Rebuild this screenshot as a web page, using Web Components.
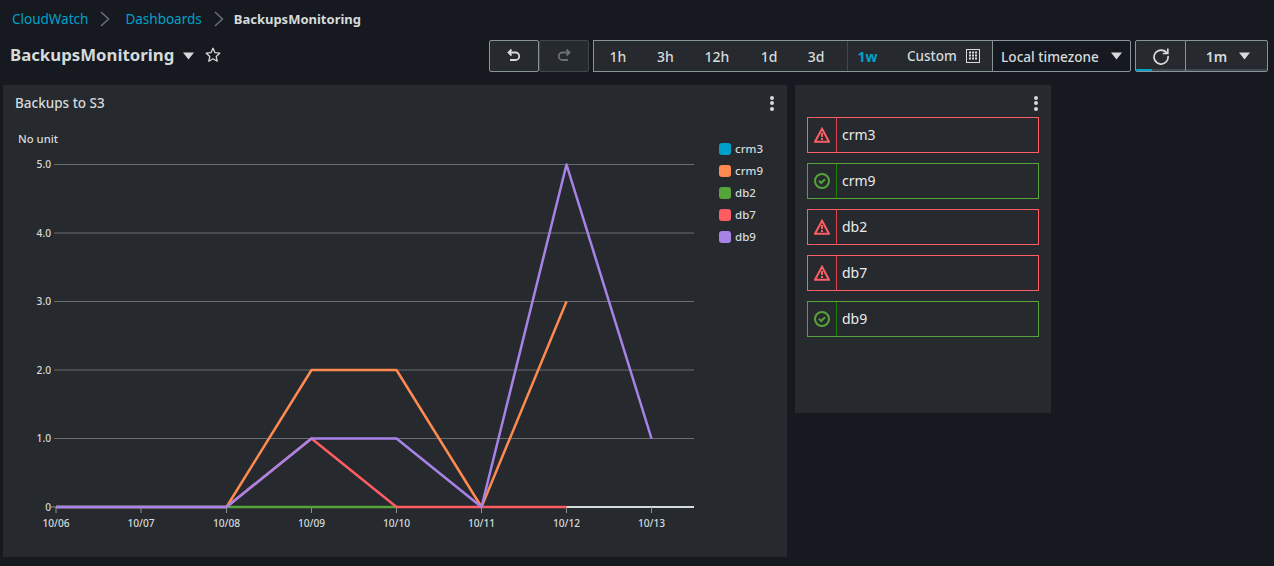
<!doctype html>
<html>
<head>
<meta charset="utf-8">
<title>BackupsMonitoring</title>
<style>
  html, body { margin: 0; height: 566px; overflow: hidden; background: #16191f; }
  body { font-family: "Noto Sans", "Open Sans", sans-serif; color: #d5dbdb; }
</style>
</head>
<body>
<cw-breadcrumbs>
  <a href="#">CloudWatch</a>
  <a href="#">Dashboards</a>
  <span>BackupsMonitoring</span>
</cw-breadcrumbs>
<cw-header name="BackupsMonitoring"></cw-header>
<cw-board>
  <cw-widget heading="Backups to S3" style="--h:472px">
    <cw-chart></cw-chart>
  </cw-widget>
  <cw-widget style="--h:328px">
    <cw-alarm state="alarm">crm3</cw-alarm>
    <cw-alarm state="ok">crm9</cw-alarm>
    <cw-alarm state="alarm">db2</cw-alarm>
    <cw-alarm state="alarm">db7</cw-alarm>
    <cw-alarm state="ok">db9</cw-alarm>
  </cw-widget>
</cw-board>

<script>
const CARET = `<svg width="11" height="8" viewBox="0 0 11 8"><path d="M0 0.500h11L5.500 7.500z" fill="currentColor"/></svg>`;

class CwBreadcrumbs extends HTMLElement {
  constructor() {
    super();
    this.attachShadow({ mode: 'open' });
    this.shadowRoot.innerHTML = `
      <style>
        :host { display: block; height: 38px; box-sizing: border-box; padding: 10px 0 0 12px; }
        nav { display: flex; align-items: center; height: 18px; font-size: 13.500px; }
        ::slotted(a) { color: #00a1c9; text-decoration: none; }
        ::slotted(span) { color: #d5dbdb; font-weight: 700; font-size: 13px; margin-left: -5px; }
        svg { margin: 0 15px 0 12px; }
      </style>
      <nav></nav>`;
    const nav = this.shadowRoot.querySelector('nav');
    [...this.children].forEach((child, i) => {
      child.slot = 'c' + i;
      if (i) nav.insertAdjacentHTML('beforeend',
        `<svg width="10" height="16" viewBox="0 0 10 16"><path d="M1 1l7.500 7L1 15" fill="none" stroke="#687078" stroke-width="1.500"/></svg>`);
      nav.insertAdjacentHTML('beforeend', `<slot name="c${i}"></slot>`);
    });
  }
}

class CwHeader extends HTMLElement {
  constructor() {
    super();
    this.attachShadow({ mode: 'open' });
    const btn = (label, cls = '') => `<button class="${cls}">${label}</button>`;
    this.shadowRoot.innerHTML = `
      <style>
        :host { display: flex; align-items: center; height: 47px; box-sizing: border-box; padding: 2px 6px 13px 10px; }
        h1 { margin: -2px 0 0; font-size: 16.800px; font-weight: 700; color: #d5dbdb; line-height: 32px; }
        .caret { margin: -1px 0 0 9px; color: #d5dbdb; display: flex; }
        .star { margin: -2px 0 0 11px; display: flex; }
        .tools { margin-left: auto; display: flex; height: 32px; }
        button, .tz {
          font: inherit; font-size: 14px; font-weight: 500; color: #d5dbdb; background: #26292e;
          border: 1px solid #879596; box-sizing: border-box; height: 32px; padding: 0;
          display: flex; align-items: center; justify-content: center;
        }
        .icon { width: 50px; border-radius: 2px; }
        .icon.off { border-color: #414750; color: #687078; }
        .range { display: flex; margin-left: 4px; border: 1px solid #879596; box-sizing: border-box; height: 32px; background: #26292e; }
        .range button { border: 0; height: 30px; background: none; }
        .r1 { width: 48px; } .r3 { width: 47px; } .r12 { width: 56px; } .rd { width: 48px; }
        .r3d { width: 54px; padding-right: 8px; }
        .r1w { width: 40px; color: #00a1c9; font-weight: 700; border-left: 1px solid #414750 !important; }
        .range .custom { width: 105px; gap: 9px; justify-content: flex-start; padding-left: 20px; font-size: 13.500px; }
        .tz { width: 139px; margin-left: -1px; background: #16191f; gap: 12px; border-radius: 0 2px 2px 0; font-size: 13.600px; }
        .tz svg { margin-top: -1px; }
        .sync { position: relative; overflow: hidden; }
        .sync.refresh { width: 51px; margin-left: 4px; border-radius: 2px 0 0 2px; }
        .sync.every { width: 83px; margin-left: -1px; gap: 12px; padding-left: 3px; border-radius: 0 2px 2px 0; font-weight: 600; }
        .sync::after { content: ""; position: absolute; left: 0; right: 0; bottom: 0; height: 2px; background: #414750; }
        .sync.refresh::before { content: ""; position: absolute; left: 0; width: 16px; bottom: 0; height: 2px; background: #00a1c9; z-index: 1; }
      </style>
      <h1>${this.getAttribute('name')}</h1>
      <span class="caret">${CARET}</span>
      <span class="star"><svg width="16" height="16" viewBox="0 0 16 16"><path d="M8 1.300l2 4.400 4.800.5-3.600 3.200 1 4.800L8 11.800l-4.200 2.400 1-4.800L1.200 6.200 6 5.700z" fill="none" stroke="#d5dbdb" stroke-width="1.300" stroke-linejoin="round"/></svg></span>
      <div class="tools">
        <button class="icon"><svg width="16" height="16" viewBox="0 0 16 16"><path d="M5.500 1.500L2.500 4.500l3 3M3 4.500h6.500a3.700 3.700 0 0 1 0 7.500H4" fill="none" stroke="currentColor" stroke-width="1.800"/></svg></button>
        <button class="icon off"><svg width="16" height="16" viewBox="0 0 16 16"><path d="M10.500 1.500l3 3-3 3M13 4.500H6.500a3.700 3.700 0 0 0 0 7.500H12" fill="none" stroke="currentColor" stroke-width="1.800"/></svg></button>
        <div class="range">
          ${btn('1h', 'r1')}${btn('3h', 'r3')}${btn('12h', 'r12')}${btn('1d', 'rd')}${btn('3d', 'r3d')}${btn('1w', 'r1w')}
          <button class="custom">Custom <svg width="14" height="14" viewBox="0 0 14 14"><rect x="0.500" y="0.500" width="13" height="13" fill="#26292e" stroke="#d5dbdb" stroke-width="1"/><path d="M3 3.500h2M6 3.500h2M9 3.500h2M3 6.500h2M6 6.500h2M9 6.500h2M3 9.500h2M6 9.500h2M9 9.500h2" stroke="#d5dbdb" stroke-width="2"/></svg></button>
        </div>
        <div class="tz">Local timezone ${CARET}</div>
        <button class="sync refresh"><svg width="18" height="18" viewBox="0 0 18 18"><path d="M14.800 6A7 7 0 1 0 16 9" fill="none" stroke="currentColor" stroke-width="1.700"/><path d="M15.800 1.500v5h-5" fill="none" stroke="currentColor" stroke-width="1.700"/></svg></button>
        <button class="sync every">1m ${CARET}</button>
      </div>`;
  }
}

class CwBoard extends HTMLElement {
  constructor() {
    super();
    this.attachShadow({ mode: 'open' });
    this.shadowRoot.innerHTML = `
      <style>
        :host { display: grid; grid-template-columns: 784px 256px; column-gap: 8px; align-items: start; padding-left: 3px; }
      </style>
      <slot></slot>`;
  }
}

class CwWidget extends HTMLElement {
  constructor() {
    super();
    this.attachShadow({ mode: 'open' });
    this.shadowRoot.innerHTML = `
      <style>
        :host { display: block; position: relative; height: var(--h); background: #26292e; box-sizing: border-box; }
        header { height: 32px; box-sizing: border-box; padding: 9px 12px 0; font-size: 13.500px; font-weight: 500; line-height: 18px; color: #d5dbdb; }
        .more { position: absolute; top: 11px; right: 13px; width: 4px; display: flex; flex-direction: column; gap: 1.300px; }
        .more i { width: 4px; height: 4px; border-radius: 50%; background: #d5dbdb; }
        .body { padding: 0 12px; display: flex; flex-direction: column; gap: 10px; }
        .body.flush { padding: 0; }
      </style>
      <header>${this.getAttribute('heading') || ''}</header>
      <div class="more"><i></i><i></i><i></i></div>
      <div class="body ${this.hasAttribute('heading') ? 'flush' : ''}"><slot></slot></div>`;
  }
}

class CwChart extends HTMLElement {
  constructor() {
    super();
    this.attachShadow({ mode: 'open' });
    const X = [56, 141, 226.5, 311.5, 396.5, 481.5, 566.5, 651.5];
    const Y = v => 507 - v * 68.5;
    const top = 117; // chart origin in page terms
    const line = (color, pts) => `<polyline fill="none" stroke="${color}" stroke-width="2.500" stroke-linejoin="round" points="${pts.map(([d, v]) => `${X[d] - 3},${Y(v) - top}`).join(' ')}"/>`;
    const dates = ['10/06', '10/07', '10/08', '10/09', '10/10', '10/11', '10/12', '10/13'];
    const grid = [1, 2, 3, 4, 5].map(v => `
      <line x1="51" x2="691" y1="${Y(v) - top}" y2="${Y(v) - top}" stroke="#6b6e6f" stroke-width="1"/>
      <text x="48" y="${Y(v) - top + 3.500}" text-anchor="end">${v.toFixed(1)}</text>`).join('');
    const ticks = dates.map((d, i) => `
      <line x1="${X[i] - 3}" x2="${X[i] - 3}" y1="${507 - top}" y2="${513 - top}" stroke="#879596"/>
      <text x="${X[i] - 3}" y="${527 - top}" text-anchor="middle">${d}</text>`).join('');
    const series = [['crm3', '#00a1c9'], ['crm9', '#ff8a50'], ['db2', '#55a33a'], ['db7', '#ff5d64'], ['db9', '#a783e8']];
    this.shadowRoot.innerHTML = `
      <style>
        :host { display: flex; }
        svg { display: block; flex: none; }
        text { font-size: 10.200px; font-weight: 500; fill: #d5dbdb; }
        .unit { font-size: 11.300px; }
        ul { list-style: none; margin: 0; padding: 25px 0 0 0; display: flex; flex-direction: column; gap: 8px; font-size: 11.500px; font-weight: 500; color: #d5dbdb; }
        li { display: flex; align-items: center; gap: 4px; height: 14px; line-height: 14px; }
        li i { width: 12px; height: 12px; border-radius: 3px; }
      </style>
      <svg width="716" height="440" viewBox="0 0 716 440">
        <text class="unit" x="15" y="${139 - top + 4}">No unit</text>
        ${grid}
        <line x1="53" x2="691" y1="${507 - top}" y2="${507 - top}" stroke="#d5dbdb" stroke-width="2"/>
        <line x1="48" x2="53" y1="${507 - top}" y2="${507 - top}" stroke="#879596"/>
        <text x="48" y="${507 - top + 3.500}" text-anchor="end">0</text>
        ${ticks}
        ${line('#00a1c9', [[0, 0], [1, 0], [2, 0]])}
        ${line('#ff8a50', [[2, 0], [3, 2], [4, 2], [5, 0], [6, 3]])}
        ${line('#55a33a', [[0, 0], [1, 0], [2, 0], [3, 0], [4, 0]])}
        ${line('#ff5d64', [[0, 0], [2, 0], [3, 1], [4, 0], [5, 0], [6, 0]])}
        ${line('#a783e8', [[0, 0], [1, 0], [2, 0], [3, 1], [4, 1], [5, 0], [6, 5], [7, 1]])}
      </svg>
      <ul>${series.map(([n, c]) => `<li><i style="background:${c}"></i>${n}</li>`).join('')}</ul>`;
  }
}

class CwAlarm extends HTMLElement {
  constructor() {
    super();
    this.attachShadow({ mode: 'open' });
    const ok = this.getAttribute('state') === 'ok';
    const icon = ok
      ? `<svg width="16" height="16" viewBox="0 0 16 16"><circle cx="8" cy="8" r="7" fill="none" stroke="#55a33a" stroke-width="2"/><path d="M5 7.800l2.200 2.200 3.800-3.800" fill="none" stroke="#55a33a" stroke-width="2"/></svg>`
      : `<svg width="16" height="16" viewBox="0 0 16 16"><path d="M8 1.800L15 14.800H1z" fill="none" stroke="#ff5d64" stroke-width="2"/><path d="M8 6v4M8 11v2" stroke="#ff5d64" stroke-width="2"/></svg>`;
    this.shadowRoot.innerHTML = `
      <style>
        :host { display: flex; height: 36px; box-sizing: border-box; border: 1px solid ${ok ? '#55a33a' : '#ff5d64'}; font-size: 14px; color: #eaeded; }
        .icon { width: 28px; flex: none; display: flex; align-items: center; justify-content: center; border-right: 1px solid ${ok ? '#1d8102' : '#e0444c'}; }
        .label { padding-left: 5px; line-height: 34px; }
      </style>
      <div class="icon">${icon}</div>
      <div class="label"><slot></slot></div>`;
  }
}

customElements.define('cw-breadcrumbs', CwBreadcrumbs);
customElements.define('cw-header', CwHeader);
customElements.define('cw-board', CwBoard);
customElements.define('cw-widget', CwWidget);
customElements.define('cw-chart', CwChart);
customElements.define('cw-alarm', CwAlarm);
</script>
</body>
</html>
